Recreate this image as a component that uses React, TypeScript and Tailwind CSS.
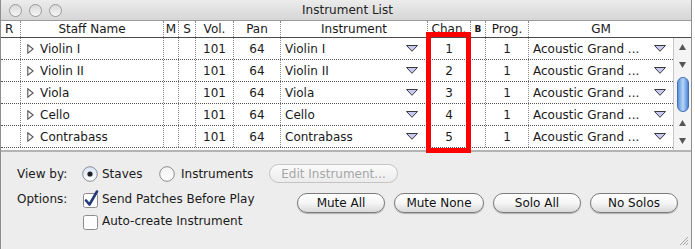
import React from 'react';

const rows = [
  { name: 'Violin I', inst: 'Violin I', chan: '1' },
  { name: 'Violin II', inst: 'Violin II', chan: '2' },
  { name: 'Viola', inst: 'Viola', chan: '3' },
  { name: 'Cello', inst: 'Cello', chan: '4' },
  { name: 'Contrabass', inst: 'Contrabass', chan: '5' },
];

const GRID = 'grid grid-cols-[19px_143px_15px_17px_38px_47px_147px_43px_15px_43px_145px]';
const DIV = 'border-l border-dotted border-[#8a8a8a]';

function DropTri() {
  return (
    <svg width="12" height="7" viewBox="0 0 12 7" className="shrink-0">
      <polygon points="0.5,0.5 11.5,0.5 6,6.3" fill="#c8c8f2" stroke="#3a3a3a" strokeWidth="1" />
    </svg>
  );
}

function Disclosure() {
  return (
    <svg width="7" height="10" viewBox="0 0 7 10" className="shrink-0">
      <polygon points="0.8,0.8 6.2,5 0.8,9.2" fill="#fff" stroke="#555" strokeWidth="1.1" />
    </svg>
  );
}

function Radio({ on }: { on: boolean }) {
  return (
    <svg width="16" height="16" viewBox="0 0 16 16" className="shrink-0">
      <defs>
        <linearGradient id={on ? 'rg1' : 'rg0'} x1="0" y1="0" x2="0" y2="1">
          <stop offset="0" stopColor={on ? '#d6e4f7' : '#f2f2f2'} />
          <stop offset="1" stopColor="#ffffff" />
        </linearGradient>
      </defs>
      <circle cx="8" cy="8" r="7.3" fill={`url(#${on ? 'rg1' : 'rg0'})`} stroke="#8c8c8c" strokeWidth="1" />
      {on && <circle cx="8" cy="8" r="2.6" fill="#1f1f1f" />}
    </svg>
  );
}

function Check({ on }: { on: boolean }) {
  return (
    <svg width="17" height="17" viewBox="0 0 17 17" className="shrink-0 overflow-visible">
      <rect x="1.5" y="2.5" width="14" height="14" rx="2" fill="#fdfdfd" stroke="#8c8c8c" strokeWidth="1" />
      {on && <path d="M4 9.5 L7.5 13.5 L15 0.5" fill="none" stroke="#233a7a" strokeWidth="2.6" strokeLinecap="round" strokeLinejoin="round" />}
    </svg>
  );
}

function AquaButton({ label, w }: { label: string; w: string }) {
  return (
    <div className={`${w} h-[20px] rounded-full border border-[#7b7b7b] bg-linear-to-b from-white via-[#f6f6f6] to-[#d9d9d9] shadow-[0_1px_1px_rgba(0,0,0,0.25)] flex items-center justify-center text-[12px] text-[#111]`}>
      {label}
    </div>
  );
}

function ScrollArrow({ up }: { up: boolean }) {
  return (
    <div className="h-[18px] flex items-center justify-center">
      <svg width="7" height="6" viewBox="0 0 7 6">
        {up ? <polygon points="3.5,0 7,6 0,6" fill="#555" /> : <polygon points="0,0 7,0 3.5,6" fill="#555" />}
      </svg>
    </div>
  );
}

export default function App() {
  return (
    <div className="w-[695px] h-[249px] bg-white overflow-hidden font-['DejaVu_Sans',sans-serif] text-[#1a1a1a]">
      <div className="relative w-[692px] h-[249px] border-l border-r border-[#8e8e8e] bg-[#ededed] flex flex-col">
        {/* Title bar */}
        <div className="h-[21px] shrink-0 bg-linear-to-b from-[#ececec] to-[#d6d6d6] border-b border-[#9a9a9a] flex items-center relative">
          <div className="flex items-center gap-[7px] ml-[8px]">
            <div className="w-[13px] h-[13px] rounded-full border border-[#9a9a9a] bg-linear-to-b from-[#dadada] to-[#f6f6f6]" />
            <div className="w-[13px] h-[13px] rounded-full border border-[#9a9a9a] bg-linear-to-b from-[#dadada] to-[#f6f6f6]" />
            <div className="w-[13px] h-[13px] rounded-full border border-[#9a9a9a] bg-linear-to-b from-[#dadada] to-[#f6f6f6]" />
          </div>
          <div className="flex-1 text-center text-[12px] leading-none pr-[58px] text-[#222]">Instrument List</div>
        </div>

        {/* Header */}
        <div className="h-[17px] shrink-0 bg-white border-b border-[#4a4a4a] flex text-[12px] leading-none">
          <div className={`${GRID} h-full`}>
            <div className="flex items-center pl-[4px]">R</div>
            <div className={`${DIV} flex items-center justify-center`}>Staff Name</div>
            <div className={`${DIV} flex items-center justify-center`}>M</div>
            <div className={`${DIV} flex items-center justify-center`}>S</div>
            <div className={`${DIV} flex items-center justify-center`}>Vol.</div>
            <div className={`${DIV} flex items-center justify-center`}>Pan</div>
            <div className={`${DIV} flex items-center justify-center`}>Instrument</div>
            <div className={`${DIV} flex items-center justify-center`}>Chan.</div>
            <div className={`${DIV} flex items-center justify-center text-[9px] font-bold`}>B</div>
            <div className={`${DIV} flex items-center justify-center`}>Prog.</div>
            <div className={`${DIV} flex items-center justify-center`}>GM</div>
          </div>
          <div className="flex-1" />
        </div>

        {/* Body */}
        <div className="flex shrink-0 border-b-2 border-[#b4b4b4]">
          <div className="flex flex-col bg-white">
            {rows.map((r) => (
              <div key={r.name} className={`${GRID} h-[22px] border-b border-dotted border-[#555] text-[12px] leading-none`}>
                <div />
                <div className={`${DIV} flex items-center pl-[6px] gap-[6px]`}>
                  <Disclosure />
                  <span>{r.name}</span>
                </div>
                <div className={DIV} />
                <div className={DIV} />
                <div className={`${DIV} flex items-center justify-center`}>101</div>
                <div className={`${DIV} flex items-center justify-center`}>64</div>
                <div className={`${DIV} flex items-center justify-between pl-[4px] pr-[9px]`}>
                  <span>{r.inst}</span>
                  <DropTri />
                </div>
                <div className={`${DIV} flex items-center justify-center`}>{r.chan}</div>
                <div className={DIV} />
                <div className={`${DIV} flex items-center justify-center`}>1</div>
                <div className={`${DIV} flex items-center justify-between pl-[4px] pr-[7px]`}>
                  <span>Acoustic Grand ...</span>
                  <DropTri />
                </div>
              </div>
            ))}
          </div>
          {/* Scrollbar */}
          <div className="w-[18px] bg-[#f4f4f4] border-l border-[#c8c8c8] flex flex-col">
            <ScrollArrow up />
            <ScrollArrow up={false} />
            <div className="mt-[3px] mx-auto w-[12px] h-[35px] rounded-full border border-[#3e6fb8] bg-linear-to-r from-[#5c93de] via-[#b9d6f7] to-[#4f86d6]" />
            <div className="h-[2px]" />
            <ScrollArrow up />
            <ScrollArrow up={false} />
          </div>
        </div>

        {/* Bottom panel */}
        <div className="flex-1 pt-[12px] pl-[16px] text-[12px] leading-none">
          <div className="h-[19px] flex items-center">
            <div className="w-[65px]">View by:</div>
            <div className="w-[77px] flex items-center gap-[4px]">
              <Radio on />
              <span>Staves</span>
            </div>
            <div className="w-[110px] flex items-center gap-[6px]">
              <Radio on={false} />
              <span>Instruments</span>
            </div>
            <div className="w-[129px] h-[19px] rounded-full border border-[#c4c4c4] bg-linear-to-b from-[#fbfbfb] to-[#ececec] flex items-center justify-center text-[#a6a6a6]">
              Edit Instrument...
            </div>
          </div>
          <div className="mt-[7px] h-[18px] flex items-center">
            <div className="w-[65px]">Options:</div>
            <div className="w-[215px] flex items-center gap-[3px]">
              <Check on />
              <span>Send Patches Before Play</span>
            </div>
            <div className="self-start mt-[3px] flex gap-[9px]">
              <AquaButton label="Mute All" w="w-[88px]" />
              <AquaButton label="Mute None" w="w-[90px]" />
              <AquaButton label="Solo All" w="w-[88px]" />
              <AquaButton label="No Solos" w="w-[88px]" />
            </div>
          </div>
          <div className="mt-[4px] h-[18px] flex items-center">
            <div className="w-[65px]" />
            <div className="flex items-center gap-[3px]">
              <Check on={false} />
              <span>Auto-create Instrument</span>
            </div>
          </div>
        </div>

        {/* resize grip */}
        <svg width="11" height="11" viewBox="0 0 11 11" className="absolute right-[2px] bottom-[3px]">
          <path d="M10 2 L2 10 M10 5 L5 10 M10 8 L8 10" stroke="#a8a8a8" strokeWidth="1" />
        </svg>

        {/* red annotation box */}
        <div className="absolute left-[425px] top-[32px] w-[45px] h-[121px] border-[5px] border-[#ff0000]" />
      </div>
    </div>
  );
}
